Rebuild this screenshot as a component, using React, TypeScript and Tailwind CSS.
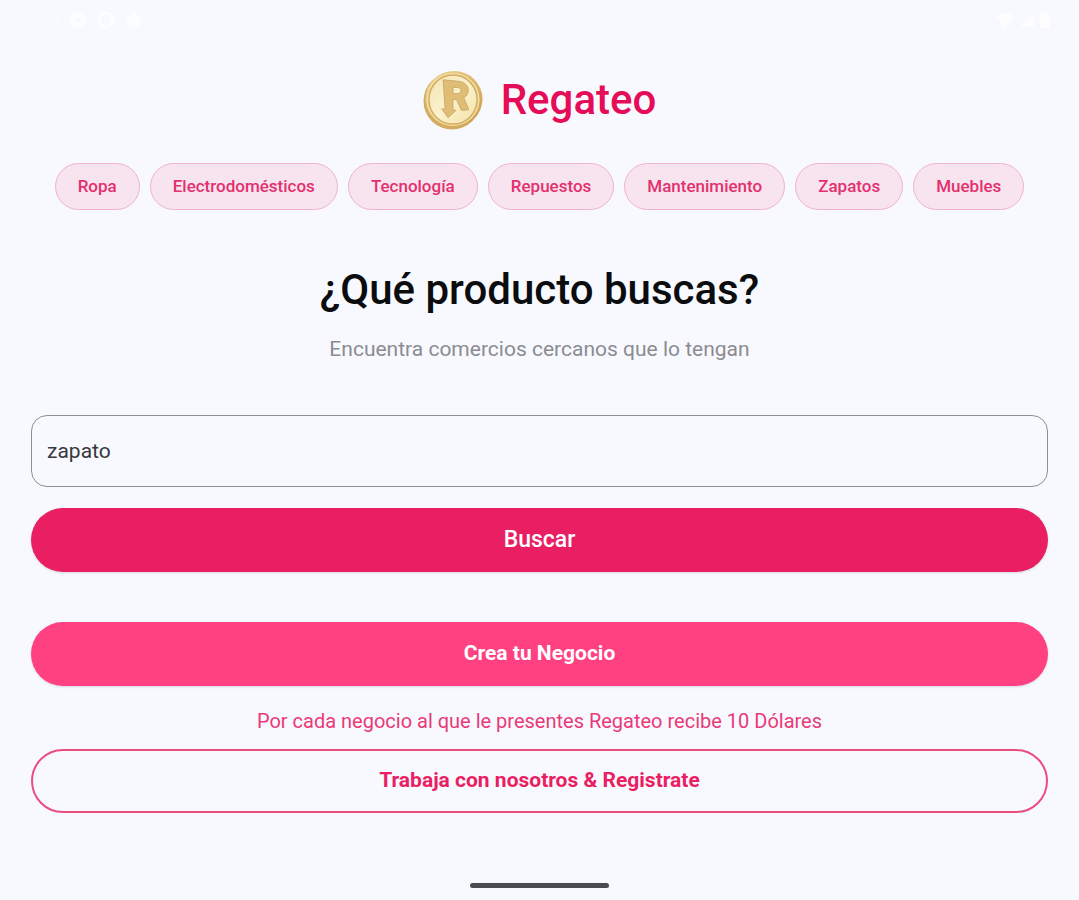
const categories = [
  "Ropa",
  "Electrodomésticos",
  "Tecnología",
  "Repuestos",
  "Mantenimiento",
  "Zapatos",
  "Muebles",
];

const StatusBar = () => {
  return (
    <div className="flex h-10 items-center justify-between px-7 text-white">
      <div className="flex items-center gap-2 opacity-70">
        <span className="text-base font-medium opacity-60">7:25</span>
        <svg className="h-5 w-5" viewBox="0 0 20 20" fill="currentColor" aria-hidden="true">
          <path d="M10 1l2.2 2.3 3.2-.3.6 3.1 2.8 1.6L17.4 10l1.400 2.800-2.800 1.600-.6 3.100-3.200-.3L10 19l-2.200-1.800-3.200.3-.6-3.100-2.800-1.600L2.600 10 1.200 7.700 4 6.100 4.600 3l3.200.3zM10 7a3 3 0 100 6 3 3 0 000-6z" fillRule="evenodd" />
        </svg>
        <svg className="h-5 w-5" viewBox="0 0 20 20" fill="none" stroke="currentColor" strokeWidth="4" aria-hidden="true">
          <circle cx="10" cy="10" r="7" />
        </svg>
        <svg className="h-5 w-5" viewBox="0 0 20 20" fill="currentColor" aria-hidden="true">
          <path d="M10 2l8 7-2 6-6 3-6-3-2-6z" />
        </svg>
      </div>
      <div className="flex items-center gap-1 opacity-80">
        <svg className="h-4 w-5" viewBox="0 0 20 16" fill="currentColor" aria-hidden="true">
          <path d="M10 16L1 4.500C6-.5 14-.5 19 4.500z" />
        </svg>
        <svg className="h-4 w-4" viewBox="0 0 16 16" fill="currentColor" aria-hidden="true">
          <path d="M15 1v14H1z" />
        </svg>
        <svg className="h-4 w-3" viewBox="0 0 12 16" fill="currentColor" aria-hidden="true">
          <path d="M4 0h4v2h3v14H1V2h3z" />
        </svg>
      </div>
    </div>
  );
};

const CoinLogo = () => {
  return (
    <svg className="h-[60px] w-[60px]" viewBox="0 0 61 60" aria-hidden="true">
      <defs>
        <linearGradient id="rim" x1="0" y1="0" x2="1" y2="1">
          <stop offset="0" stopColor="#ecd59c" />
          <stop offset="0.5" stopColor="#dfba6e" />
          <stop offset="1" stopColor="#c79a4c" />
        </linearGradient>
        <linearGradient id="face" x1="0" y1="0" x2="1" y2="1">
          <stop offset="0" stopColor="#f4e4b0" />
          <stop offset="0.5" stopColor="#fbf1cb" />
          <stop offset="1" stopColor="#f5e2a8" />
        </linearGradient>
      </defs>
      <ellipse cx="29.500" cy="31" rx="29" ry="29" fill="#d3ac62" />
      <ellipse cx="31.500" cy="29" rx="29" ry="28.500" fill="url(#rim)" />
      <ellipse cx="30.500" cy="29.500" rx="27" ry="27" fill="#f3dfa6" />
      <ellipse cx="30.500" cy="29.500" rx="24.500" ry="25" fill="url(#face)" stroke="#d4ac60" strokeWidth="1.500" />
      <path
        d="M20.500 9.500L36 11c6 .6 10 4 10 9 0 3.500-1.500 6-4.500 7.500L46.500 40l-7.500.5L34 29.500h-3.500V40l3 .5-8 7.500-6.500-9 3.500.5zM30.500 17v6.500H35c2.500 0 3.500-1 3.500-3s-1-3-3.500-3.200z"
        fill="#dfbd74"
        fillRule="evenodd"
        stroke="#ccab6b"
        strokeWidth="1"
        strokeLinejoin="round"
      />
    </svg>
  );
};

export default function App() {
  return (
    <div className="flex min-h-screen flex-col bg-[#f8f9ff] font-[Roboto,sans-serif]">
      <StatusBar />

      <main className="px-[31px] pt-[30px] text-center">
        <header className="flex items-center justify-center gap-[18px]">
          <CoinLogo />
          <span className="text-[42px] leading-[60px] font-medium text-[#e50c58]">Regateo</span>
        </header>

        <nav className="mt-[33px] flex flex-wrap justify-center gap-[10px]">
          {categories.map((category) => (
            <button
              key={category}
              type="button"
              className="h-[47px] rounded-full border border-[#f1b3cb] bg-[#f7e4ee] px-[22px] text-[17px] font-medium text-[#e3306e]"
            >
              {category}
            </button>
          ))}
        </nav>

        <h1 className="mt-14 text-[42px] leading-[48px] font-medium text-[#0b0c0e]">
          ¿Qué producto buscas?
        </h1>
        <p className="mt-[21px] text-[21px] leading-7 text-[#8b8c90]">
          Encuentra comercios cercanos que lo tengan
        </p>

        <form onSubmit={(e) => e.preventDefault()}>
          <input
            type="text"
            aria-label="Producto"
            defaultValue="zapato"
            className="mt-[52px] block h-[72px] w-full rounded-2xl border border-[#8e9094] bg-transparent px-[15px] text-[21px] text-[#37383c] outline-none"
          />
          <button
            type="submit"
            className="mt-[21px] block h-16 w-full rounded-full bg-[#e91e63] text-[23px] font-medium text-white shadow-sm"
          >
            Buscar
          </button>
        </form>

        <button
          type="button"
          className="mt-[50px] block h-16 w-full rounded-full bg-[#ff4081] text-[21px] font-bold text-white shadow-sm"
        >
          Crea tu Negocio
        </button>
        <p className="mt-[21px] text-[20px] leading-7 text-[#e93a78]">
          Por cada negocio al que le presentes Regateo recibe 10 Dólares
        </p>
        <button
          type="button"
          className="mt-[14px] block h-16 w-full rounded-full border-2 border-[#ea4c80] text-[21px] font-bold text-[#e91e63]"
        >
          Trabaja con nosotros &amp; Registrate
        </button>
      </main>

      <div className="mt-auto flex justify-center pt-8 pb-3">
        <div className="h-[5px] w-[139px] rounded-full bg-[#4b4c50]" />
      </div>
    </div>
  );
}
